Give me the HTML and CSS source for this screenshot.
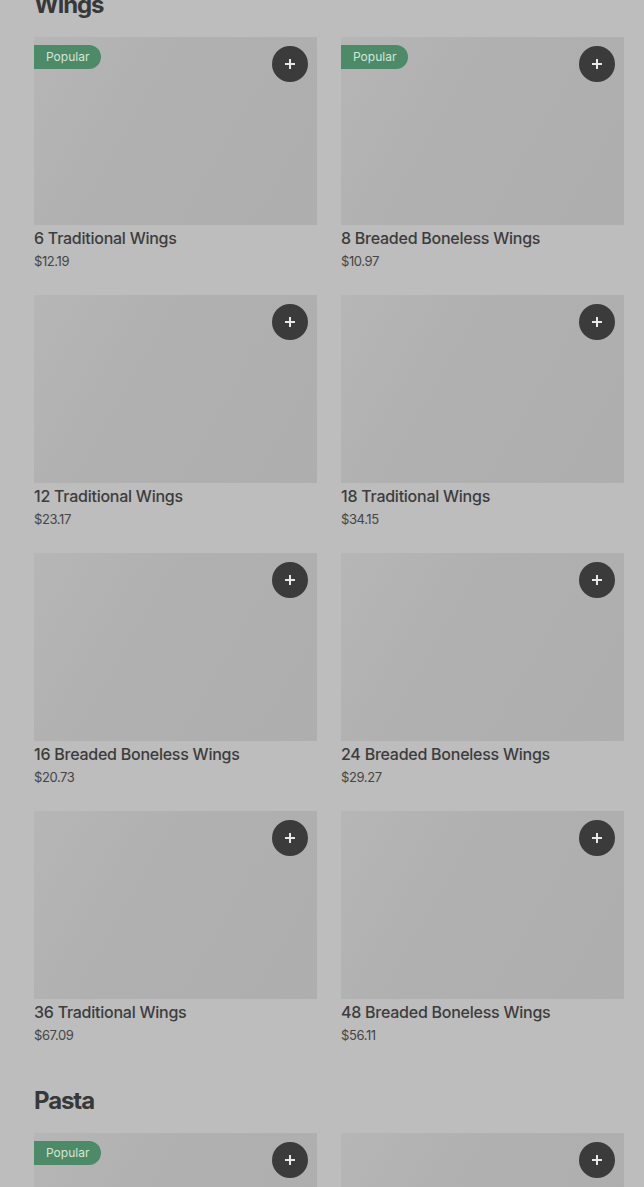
FILE: index.html
```html
<!DOCTYPE html>
<html>
<head>
<meta charset="utf-8">
<link rel="stylesheet" href="styles.css">
</head>
<body>
<main class="menu">
  <section class="section">
    <h2 class="section-title wings">Wings</h2>
    <div class="grid">
      <div class="card">
        <div class="thumb"><span class="badge">Popular</span><button class="add"><svg viewBox="0 0 16 16" width="16" height="16"><path d="M8 3v10M3 8h10" stroke="#e8e8e8" stroke-width="2"/></svg></button></div>
        <div class="name">6 Traditional Wings</div>
        <div class="price">$12.19</div>
      </div>
      <div class="card">
        <div class="thumb"><span class="badge">Popular</span><button class="add"><svg viewBox="0 0 16 16" width="16" height="16"><path d="M8 3v10M3 8h10" stroke="#e8e8e8" stroke-width="2"/></svg></button></div>
        <div class="name">8 Breaded Boneless Wings</div>
        <div class="price">$10.97</div>
      </div>
      <div class="card">
        <div class="thumb"><button class="add"><svg viewBox="0 0 16 16" width="16" height="16"><path d="M8 3v10M3 8h10" stroke="#e8e8e8" stroke-width="2"/></svg></button></div>
        <div class="name">12 Traditional Wings</div>
        <div class="price">$23.17</div>
      </div>
      <div class="card">
        <div class="thumb"><button class="add"><svg viewBox="0 0 16 16" width="16" height="16"><path d="M8 3v10M3 8h10" stroke="#e8e8e8" stroke-width="2"/></svg></button></div>
        <div class="name">18 Traditional Wings</div>
        <div class="price">$34.15</div>
      </div>
      <div class="card">
        <div class="thumb"><button class="add"><svg viewBox="0 0 16 16" width="16" height="16"><path d="M8 3v10M3 8h10" stroke="#e8e8e8" stroke-width="2"/></svg></button></div>
        <div class="name">16 Breaded Boneless Wings</div>
        <div class="price">$20.73</div>
      </div>
      <div class="card">
        <div class="thumb"><button class="add"><svg viewBox="0 0 16 16" width="16" height="16"><path d="M8 3v10M3 8h10" stroke="#e8e8e8" stroke-width="2"/></svg></button></div>
        <div class="name">24 Breaded Boneless Wings</div>
        <div class="price">$29.27</div>
      </div>
      <div class="card">
        <div class="thumb"><button class="add"><svg viewBox="0 0 16 16" width="16" height="16"><path d="M8 3v10M3 8h10" stroke="#e8e8e8" stroke-width="2"/></svg></button></div>
        <div class="name">36 Traditional Wings</div>
        <div class="price">$67.09</div>
      </div>
      <div class="card">
        <div class="thumb"><button class="add"><svg viewBox="0 0 16 16" width="16" height="16"><path d="M8 3v10M3 8h10" stroke="#e8e8e8" stroke-width="2"/></svg></button></div>
        <div class="name">48 Breaded Boneless Wings</div>
        <div class="price">$56.11</div>
      </div>
    </div>
  </section>
  <section class="section">
    <h2 class="section-title">Pasta</h2>
    <div class="grid">
      <div class="card">
        <div class="thumb"><span class="badge">Popular</span><button class="add"><svg viewBox="0 0 16 16" width="16" height="16"><path d="M8 3v10M3 8h10" stroke="#e8e8e8" stroke-width="2"/></svg></button></div>
      </div>
      <div class="card">
        <div class="thumb"><button class="add"><svg viewBox="0 0 16 16" width="16" height="16"><path d="M8 3v10M3 8h10" stroke="#e8e8e8" stroke-width="2"/></svg></button></div>
      </div>
    </div>
  </section>
</main>
</body>
</html>
```

FILE: styles.css
```css
html, body {
  margin: 0;
  padding: 0;
  background: #bdbdbd;
  overflow: hidden;
}
body {
  font-family: Inter, "Noto Sans", sans-serif;
  color: #3a3a3a;
}
.menu {
  padding: 0 20px 0 34px;
}
.section {
  margin-bottom: 40px;
}
.section-title {
  margin: 0 0 16px;
  font-size: 24px;
  line-height: 32px;
  font-weight: 700;
  letter-spacing: -1.1px;
  color: #383838;
}
.section-title.wings {
  margin-top: -11px;
  margin-bottom: 16px;
}
.grid {
  display: grid;
  grid-template-columns: 283px 283px;
  column-gap: 24px;
  row-gap: 24px;
}
.card {
  height: 234px;
}
.thumb {
  position: relative;
  height: 188px;
  background: linear-gradient(120deg, #b6b6b6 0%, #b0b0b0 40%, #aeaeae 100%);
}
.badge {
  position: absolute;
  left: 0;
  top: 8px;
  height: 24px;
  line-height: 24px;
  padding: 0 12px;
  font-size: 12px;
  background: #4c8a68;
  color: #d6e6da;
  border-radius: 0 12px 12px 0;
}
.add {
  position: absolute;
  top: 9px;
  right: 9px;
  width: 36px;
  height: 36px;
  border-radius: 50%;
  border: none;
  padding: 0;
  background: #3b3b3b;
  display: flex;
  align-items: center;
  justify-content: center;
}
.name {
  margin-top: 1px;
  font-size: 16px;
  line-height: 24px;
  font-weight: 500;
  letter-spacing: -0.25px;
  color: #3c3c3c;
}
.price {
  margin-top: 1px;
  font-size: 13px;
  line-height: 21px;
  color: #454545;
  letter-spacing: -0.4px;
}
```
